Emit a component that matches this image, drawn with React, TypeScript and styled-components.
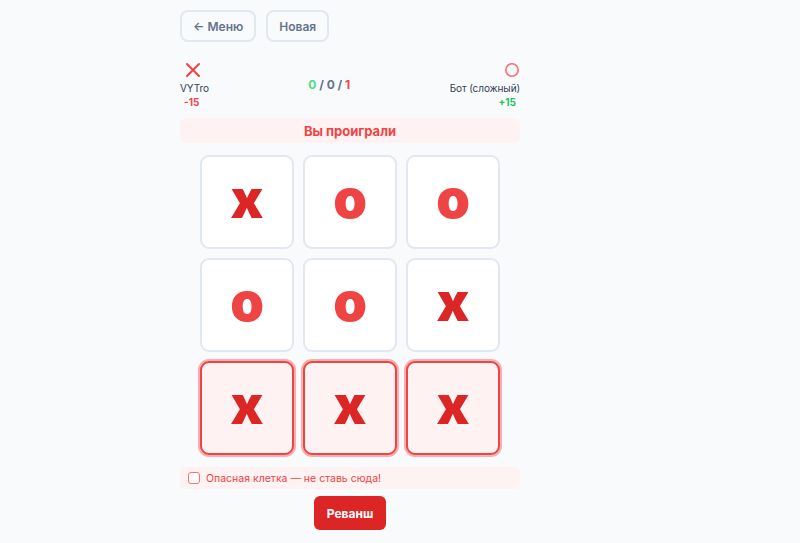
import React from "react";
import styled, { createGlobalStyle } from "styled-components";

const Global = createGlobalStyle`
  html, body { margin: 0; padding: 0; background: #f8fafc; }
  body { font-family: Inter, "Noto Sans", sans-serif; }
  * { box-sizing: border-box; }
`;

const Page = styled.div`
  display: flex;
  justify-content: center;
  padding: 10px 100px 0 0;
  min-height: 543px;
`;

const Column = styled.div`
  width: 340px;
  display: flex;
  flex-direction: column;
`;

const Toolbar = styled.div`
  display: flex;
  gap: 10px;
`;

const NavButton = styled.button`
  height: 32px;
  padding: 0 11px;
  border: 2px solid #e2e8f0;
  border-radius: 8px;
  background: #f8fafc;
  color: #64748b;
  font-family: Inter, sans-serif;
  font-weight: 600;
  font-size: 12px;
  cursor: pointer;
`;

const Scoreboard = styled.div`
  display: flex;
  justify-content: space-between;
  margin-top: 20px;
  height: 48px;
`;

const Player = styled.div<{ $right?: boolean }>`
  display: flex;
  flex-direction: column;
  align-items: ${(p) => (p.$right ? "flex-end" : "flex-start")};
`;

const Mark = styled.div<{ $right?: boolean }>`
  width: 16px;
  height: 16px;
  display: flex;
  margin: ${(p) => (p.$right ? "0 0 0 0" : "0 0 0 5px")};
`;

const Name = styled.div`
  margin-top: 3px;
  font-family: Inter, sans-serif;
  font-size: 10px;
  letter-spacing: -0.1px;
  color: #334155;
  line-height: 14px;
`;

const Delta = styled.div<{ $good?: boolean }>`
  font-family: Inter, sans-serif;
  font-size: 10px;
  font-weight: 700;
  line-height: 14px;
  padding: 0 4px;
  color: ${(p) => (p.$good ? "#22c55e" : "#ef4444")};
`;

const Tally = styled.div`
  padding-top: 15px;
  font-family: Inter, sans-serif;
  font-size: 12px;
  font-weight: 700;
  color: #64748b;
`;

const Num = styled.span<{ $c: string }>`
  color: ${(p) => p.$c};
`;

const Banner = styled.div`
  margin-top: 8px;
  height: 25px;
  border-radius: 6px;
  background: #fef2f2;
  color: #ef4444;
  font-family: Inter, sans-serif;
  font-weight: 700;
  font-size: 13px;
  display: flex;
  align-items: center;
  justify-content: center;
`;

const Board = styled.div`
  margin: 12px auto 0;
  display: grid;
  grid-template-columns: repeat(3, 94px);
  grid-auto-rows: 94px;
  gap: 9px;
`;

const Cell = styled.div<{ $danger?: boolean; $o?: boolean }>`
  border-radius: 9px;
  border: ${(p) => (p.$danger ? "2px solid #ef4444" : "2px solid #e2e8f0")};
  background: ${(p) => (p.$danger ? "#fef2f2" : "#ffffff")};
  box-shadow: ${(p) => (p.$danger ? "0 0 0 2px rgba(248,113,113,0.55)" : "none")};
  display: flex;
  align-items: center;
  justify-content: center;
  font-family: Inter, sans-serif;
  font-weight: 900;
  font-size: 54px;
  line-height: 1;
  color: ${(p) => (p.$o ? "#ef4444" : "#dc2626")};
  padding-bottom: 6px;
`;

const Hint = styled.div`
  margin-top: 12px;
  height: 22px;
  border-radius: 5px;
  background: #fef2f2;
  display: flex;
  align-items: center;
  gap: 6px;
  padding-left: 8px;
  color: #ef4444;
  font-family: Inter, sans-serif;
  font-size: 10.5px;
`;

const Box = styled.span`
  width: 12px;
  height: 12px;
  border: 1.5px solid #f87171;
  border-radius: 3px;
  background: #fff;
`;

const Rematch = styled.button`
  margin: 7px auto 0;
  width: 72px;
  height: 34px;
  border: none;
  border-radius: 6px;
  background: #dc2626;
  color: #fff;
  font-family: Inter, sans-serif;
  font-weight: 700;
  font-size: 12px;
  cursor: pointer;
`;

const Cross = () => (
  <svg width="16" height="16" viewBox="0 0 16 16">
    <path d="M2 2 L14 14 M14 2 L2 14" stroke="#ef4444" strokeWidth="2" strokeLinecap="round" />
  </svg>
);

const Ring = () => (
  <svg width="16" height="16" viewBox="0 0 16 16">
    <circle cx="8" cy="8" r="6.2" fill="none" stroke="#f87171" strokeWidth="1.6" />
  </svg>
);

const cells: { v: "X" | "O"; danger?: boolean }[] = [
  { v: "X" }, { v: "O" }, { v: "O" },
  { v: "O" }, { v: "O" }, { v: "X" },
  { v: "X", danger: true }, { v: "X", danger: true }, { v: "X", danger: true },
];

export default function App() {
  return (
    <>
      <Global />
      <Page>
        <Column>
          <Toolbar>
            <NavButton>← Меню</NavButton>
            <NavButton>Новая</NavButton>
          </Toolbar>
          <Scoreboard>
            <Player>
              <Mark><Cross /></Mark>
              <Name>VYTro</Name>
              <Delta>-15</Delta>
            </Player>
            <Tally>
              <Num $c="#4ade80">0</Num> / 0 / <Num $c="#ef4444">1</Num>
            </Tally>
            <Player $right>
              <Mark $right><Ring /></Mark>
              <Name>Бот (сложный)</Name>
              <Delta $good>+15</Delta>
            </Player>
          </Scoreboard>
          <Banner>Вы проиграли</Banner>
          <Board>
            {cells.map((c, i) => (
              <Cell key={i} $danger={c.danger} $o={c.v === "O"}>
                {c.v === "X" ? "x" : "o"}
              </Cell>
            ))}
          </Board>
          <Hint>
            <Box />
            Опасная клетка — не ставь сюда!
          </Hint>
          <Rematch>Реванш</Rematch>
        </Column>
      </Page>
    </>
  );
}
